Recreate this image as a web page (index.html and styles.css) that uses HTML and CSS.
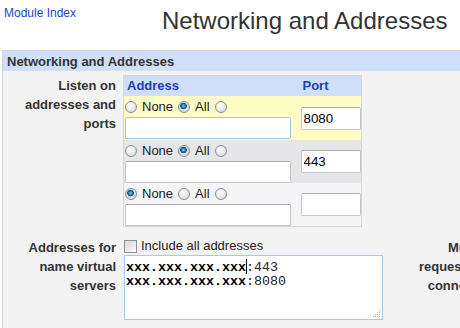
FILE: index.html
```html
<!DOCTYPE html>
<html lang="en">
<head>
  <meta charset="UTF-8">
  <meta name="viewport" content="width=device-width, initial-scale=1.0">
  <title>Networking and Addresses</title>
  <link rel="stylesheet" href="styles.css">
</head>
<body>
  <div class="topbar">
    <a class="module-link" href="#">Module Index</a>
    <h1 class="page-title">Networking and Addresses</h1>
  </div>

  <div class="panel">
    <div class="panel-head">Networking and Addresses</div>
    <div class="panel-body">

      <div class="form-row">
        <div class="field-label">Listen on addresses and ports</div>
        <table class="listen-table">
          <tr class="head-row">
            <th class="col-addr">Address</th>
            <th class="col-port">Port</th>
          </tr>
          <tr class="row-a">
            <td class="addr-cell">
              <div class="radio-line">
                <input type="radio" name="l1"><span class="opt">None</span>
                <input type="radio" name="l1" checked><span class="opt">All</span>
                <input type="radio" name="l1">
              </div>
              <input type="text" class="addr-input focused">
            </td>
            <td class="port-cell"><input type="text" class="port-input" value="8080"></td>
          </tr>
          <tr class="row-b">
            <td class="addr-cell">
              <div class="radio-line">
                <input type="radio" name="l2"><span class="opt">None</span>
                <input type="radio" name="l2" checked><span class="opt">All</span>
                <input type="radio" name="l2">
              </div>
              <input type="text" class="addr-input">
            </td>
            <td class="port-cell"><input type="text" class="port-input" value="443"></td>
          </tr>
          <tr class="row-c">
            <td class="addr-cell">
              <div class="radio-line">
                <input type="radio" name="l3" checked><span class="opt">None</span>
                <input type="radio" name="l3"><span class="opt">All</span>
                <input type="radio" name="l3">
              </div>
              <input type="text" class="addr-input">
            </td>
            <td class="port-cell"><input type="text" class="port-input"></td>
          </tr>
        </table>
      </div>

      <div class="form-row vhost-row">
        <div class="field-label">Addresses for name virtual servers</div>
        <div class="vhost-field">
          <label class="check-line"><input type="checkbox">Include all addresses</label>
          <div class="addr-box">
            <div><b>xxx.xxx.xxx.xxx</b><span class="caret"></span>:443</div>
            <div><b>xxx.xxx.xxx.xxx</b>:8080</div>
            <svg class="grip" width="10" height="10" viewBox="0 0 10 10">
              <rect x="8" y="2" width="1" height="1" fill="#b4b4b4"/>
              <rect x="6" y="4" width="1" height="1" fill="#b4b4b4"/>
              <rect x="8" y="4" width="1" height="1" fill="#b4b4b4"/>
              <rect x="4" y="6" width="1" height="1" fill="#b4b4b4"/>
              <rect x="6" y="6" width="1" height="1" fill="#b4b4b4"/>
              <rect x="8" y="6" width="1" height="1" fill="#b4b4b4"/>
              <rect x="2" y="8" width="1" height="1" fill="#b4b4b4"/>
              <rect x="4" y="8" width="1" height="1" fill="#b4b4b4"/>
              <rect x="6" y="8" width="1" height="1" fill="#b4b4b4"/>
              <rect x="8" y="8" width="1" height="1" fill="#b4b4b4"/>
            </svg>
          </div>
        </div>
        <div class="field-label side-label">Multiple requests per connection</div>
      </div>

    </div>
  </div>
</body>
</html>
```

FILE: styles.css
```css
* {
    box-sizing: border-box;
}

html {
    overflow: hidden;
}

body {
    margin: 0;
    width: 660px;
    background: #fff;
    color: #333;
    font-family: "Liberation Sans", Arial, sans-serif;
    font-size: 13px;
}

.topbar {
    display: flex;
    height: 50px;
}

.module-link {
    display: block;
    width: 158px;
    margin: 6px 0 0 4px;
    font-size: 12px;
    line-height: 14px;
    color: #2444cc;
    text-decoration: none;
}

.page-title {
    margin: 7px 0 0 0;
    font-size: 24px;
    font-weight: normal;
    line-height: 28px;
    color: #333;
}

.panel {
    margin-left: 2px;
    border: 1px solid #d4d4d4;
    border-bottom: none;
    background: #f3f3f3;
    min-height: 280px;
}

.panel-head {
    height: 20px;
    padding: 2px 4px 0;
    line-height: 18px;
    font-weight: bold;
    background: #cfdffa;
}

.panel-body {
    padding-top: 4px;
}

.form-row {
    display: flex;
    align-items: flex-start;
}

.field-label {
    width: 113px;
    margin-top: 1px;
    text-align: right;
    font-weight: bold;
    line-height: 19px;
    color: #333;
}

/* listen table */
.listen-table {
    margin-left: 7px;
    border-collapse: collapse;
    border: 1px solid #d6d6d6;
    background: #fff;
}

.listen-table td,
.listen-table th {
    padding: 0;
}

.head-row th {
    height: 20px;
    line-height: 20px;
    text-align: left;
    color: #1f40b0;
    background: #cfdffa;
}

.col-addr {
    width: 174px;
    padding-left: 3px !important;
}

.col-port {
    width: 63px;
    padding-left: 5px !important;
}

.row-a { background: #fffcc4; }
.row-b { background: #e6e6e8; }
.row-c { background: #f5f5f7; }

.row-a .addr-cell {
    padding-bottom: 1px;
}

.addr-cell {
    padding-left: 1px !important;
    vertical-align: top;
}

.port-cell {
    padding-left: 3px !important;
    vertical-align: middle;
}

.radio-line {
    display: flex;
    align-items: center;
    height: 21px;
    line-height: 21px;
}

.opt {
    margin-right: 5px;
    color: #222;
}

input[type="radio"] {
    appearance: none;
    -webkit-appearance: none;
    width: 12px;
    height: 12px;
    margin: 0 5px 0 0;
    border: 1px solid #8c8e90;
    border-radius: 50%;
    background: radial-gradient(circle at 40% 35%, #fff 0, #f0f0f0 35%, #cfcfcf 100%);
}

input[type="radio"]:checked {
    background: radial-gradient(circle at 45% 40%, #9fdcf8 0, #2c86c4 1.5px, #0d4d86 3px, #e4e4e4 3.6px, #cfcfcf 100%);
}

.addr-input,
.port-input {
    display: block;
    margin: 0;
    padding: 0 2px;
    border: 1px solid #c6c6c6;
    border-top-color: #a9a9a9;
    border-radius: 2px;
    background: #fff;
    font-family: "Liberation Sans", Arial, sans-serif;
    font-size: 13.33px;
    color: #000;
    outline: none;
}

.addr-input {
    width: 166px;
    height: 22px;
}

.addr-input.focused {
    border-color: #a4c5e8;
}

.port-input {
    width: 60px;
    height: 23px;
}

/* virtual servers row */
.vhost-row {
    margin-top: 10px;
}

.vhost-field {
    margin-left: 8px;
    width: 259px;
}

.check-line {
    display: flex;
    align-items: center;
    height: 18px;
    line-height: 18px;
    color: #222;
}

input[type="checkbox"] {
    appearance: none;
    -webkit-appearance: none;
    width: 13px;
    height: 13px;
    margin: 0 4px 0 0;
    border: 1px solid #8f8f8f;
    background: linear-gradient(135deg, #d6d6d6, #fcfcfc);
}

.addr-box {
    position: relative;
    height: 65px;
    padding: 3px 1px;
    border: 1px solid #a7c8e8;
    background: #fff;
    font-family: "Liberation Mono", "Courier New", monospace;
    font-size: 13.33px;
    line-height: 14px;
    color: #222;
}

.addr-box b {
    color: #000;
}

.caret {
    display: inline-block;
    width: 1px;
    height: 15px;
    margin-right: -1px;
    vertical-align: -3px;
    background: #000;
}

.grip {
    position: absolute;
    right: 1px;
    bottom: 1px;
}

.side-label {
    width: 90px;
    margin-left: 24px;
}
```
